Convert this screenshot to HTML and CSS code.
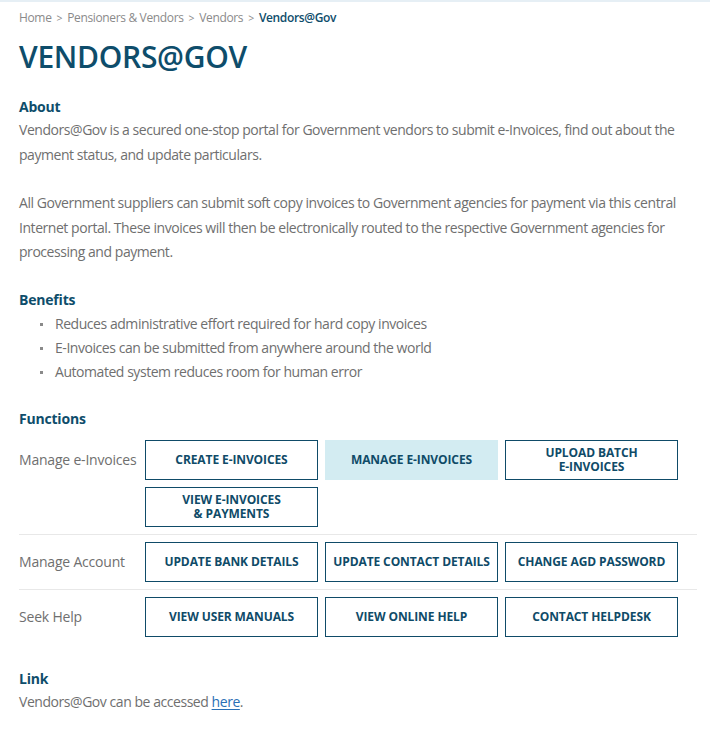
FILE: index.html
```html
<!DOCTYPE html>
<html lang="en">
<head>
<meta charset="utf-8">
<title>Vendors@Gov</title>
<link rel="stylesheet" href="styles.css">
</head>
<body>
<div class="topline"></div>
<main class="page">
  <nav class="breadcrumb">
    <a href="#">Home</a><span class="sep">&gt;</span><a href="#">Pensioners &amp; Vendors</a><span class="sep">&gt;</span><a href="#">Vendors</a><span class="sep">&gt;</span><span class="current">Vendors@Gov</span>
  </nav>
  <h1 class="title">VENDORS@GOV</h1>

  <section class="section about">
    <h2 class="heading">About</h2>
    <p class="para">Vendors@Gov is a secured one-stop portal for Government vendors to submit e-Invoices, find out about the payment status, and update particulars.</p>
    <p class="para">All Government suppliers can submit soft copy invoices to Government agencies for payment via this central Internet portal. These invoices will then be electronically routed to the respective Government agencies for processing and payment.</p>
  </section>

  <section class="section benefits">
    <h2 class="heading">Benefits</h2>
    <ul class="list">
      <li>Reduces administrative effort required for hard copy invoices</li>
      <li>E-Invoices can be submitted from anywhere around the world</li>
      <li>Automated system reduces room for human error</li>
    </ul>
  </section>

  <section class="section functions">
    <h2 class="heading">Functions</h2>
    <div class="func-row">
      <div class="func-label">Manage e-Invoices</div>
      <a class="btn" href="#">CREATE E-INVOICES</a>
      <a class="btn active" href="#">MANAGE E-INVOICES</a>
      <a class="btn" href="#"><span class="btn-text">UPLOAD BATCH<br>E-INVOICES</span></a>
      <a class="btn col2" href="#"><span class="btn-text">VIEW E-INVOICES<br>&amp; PAYMENTS</span></a>
    </div>
    <div class="func-row">
      <div class="func-label">Manage Account</div>
      <a class="btn" href="#">UPDATE BANK DETAILS</a>
      <a class="btn" href="#">UPDATE CONTACT DETAILS</a>
      <a class="btn" href="#">CHANGE AGD PASSWORD</a>
    </div>
    <div class="func-row last">
      <div class="func-label">Seek Help</div>
      <a class="btn" href="#">VIEW USER MANUALS</a>
      <a class="btn" href="#">VIEW ONLINE HELP</a>
      <a class="btn" href="#">CONTACT HELPDESK</a>
    </div>
  </section>

  <section class="section link">
    <h2 class="heading">Link</h2>
    <p class="para">Vendors@Gov can be accessed <a class="inline-link" href="#">here</a>.</p>
  </section>
</main>
</body>
</html>
```
FILE: styles.css
```css
* { box-sizing: border-box; }
html, body { margin: 0; padding: 0; background: #fff; }
body {
  font-family: "Open Sans", "DejaVu Sans", sans-serif;
  color: #6f6f6f;
  font-size: 14px;
  letter-spacing: -0.45px;
}
.topline { height: 2px; background: #e6eff5; }
.page { padding: 0 19px; }
.breadcrumb {
  font-size: 12px;
  line-height: 16px;
  padding-top: 8px;
  color: #8a8a8a;
  letter-spacing: -0.35px;
}
.breadcrumb a { color: #8a8a8a; text-decoration: none; }
.breadcrumb .sep { margin: 0 5px; font-size: 10.5px; }
.breadcrumb .current { color: #0e4d6b; font-weight: 600; }
.title {
  margin: 11px 0 0;
  font-size: 30px;
  line-height: 40px;
  font-weight: 600;
  color: #0e4d6b;
  letter-spacing: -0.3px;
}
.section { margin-top: 17px; }
.heading {
  margin: 0;
  font-size: 14px;
  line-height: 22px;
  font-weight: 700;
  color: #0e4d6b;
  letter-spacing: -0.2px;
}
.para {
  margin: 0 0 24px;
  line-height: 24.5px;
}
.about { margin-top: 19px; }
.benefits { margin-top: 22px; }
.list {
  margin: 1px 0 0;
  padding: 0 0 0 36px;
  list-style: none;
}
.list li {
  position: relative;
  line-height: 24px;
}
.list li::before {
  content: "";
  position: absolute;
  left: -15px;
  top: 11px;
  width: 3px;
  height: 3px;
  background: #8a8a8a;
}
.functions { margin-top: 24px; }
.functions .heading { margin-bottom: 10px; }
.func-row {
  display: grid;
  grid-template-columns: 119px 173px 173px 173px;
  column-gap: 7px;
  row-gap: 7px;
  padding: 7px 0;
  border-bottom: 1px solid #e8e8e8;
  width: 678px;
}
.func-row:first-of-type { padding-top: 0; }
.func-row.last { border-bottom: none; }
.func-label {
  height: 40px;
  display: flex;
  align-items: center;
  white-space: nowrap;
  letter-spacing: -0.2px;
}
.btn {
  height: 40px;
  display: flex;
  align-items: center;
  justify-content: center;
  text-align: center;
  border: 1px solid #0f4b68;
  color: #0f4b68;
  font-size: 12px;
  line-height: 14px;
  font-weight: 700;
  text-decoration: none;
  letter-spacing: -0.1px;
}
.btn-text { display: block; line-height: 14px; }
.btn.active { background: #d3ecf2; border-color: #d3ecf2; }
.btn.col2 { grid-column: 2; }
.link { margin-top: 24px; }
.link .para { margin: 0; }
.inline-link { color: #2a6fb5; text-decoration: underline; text-underline-offset: 2px; }
```
